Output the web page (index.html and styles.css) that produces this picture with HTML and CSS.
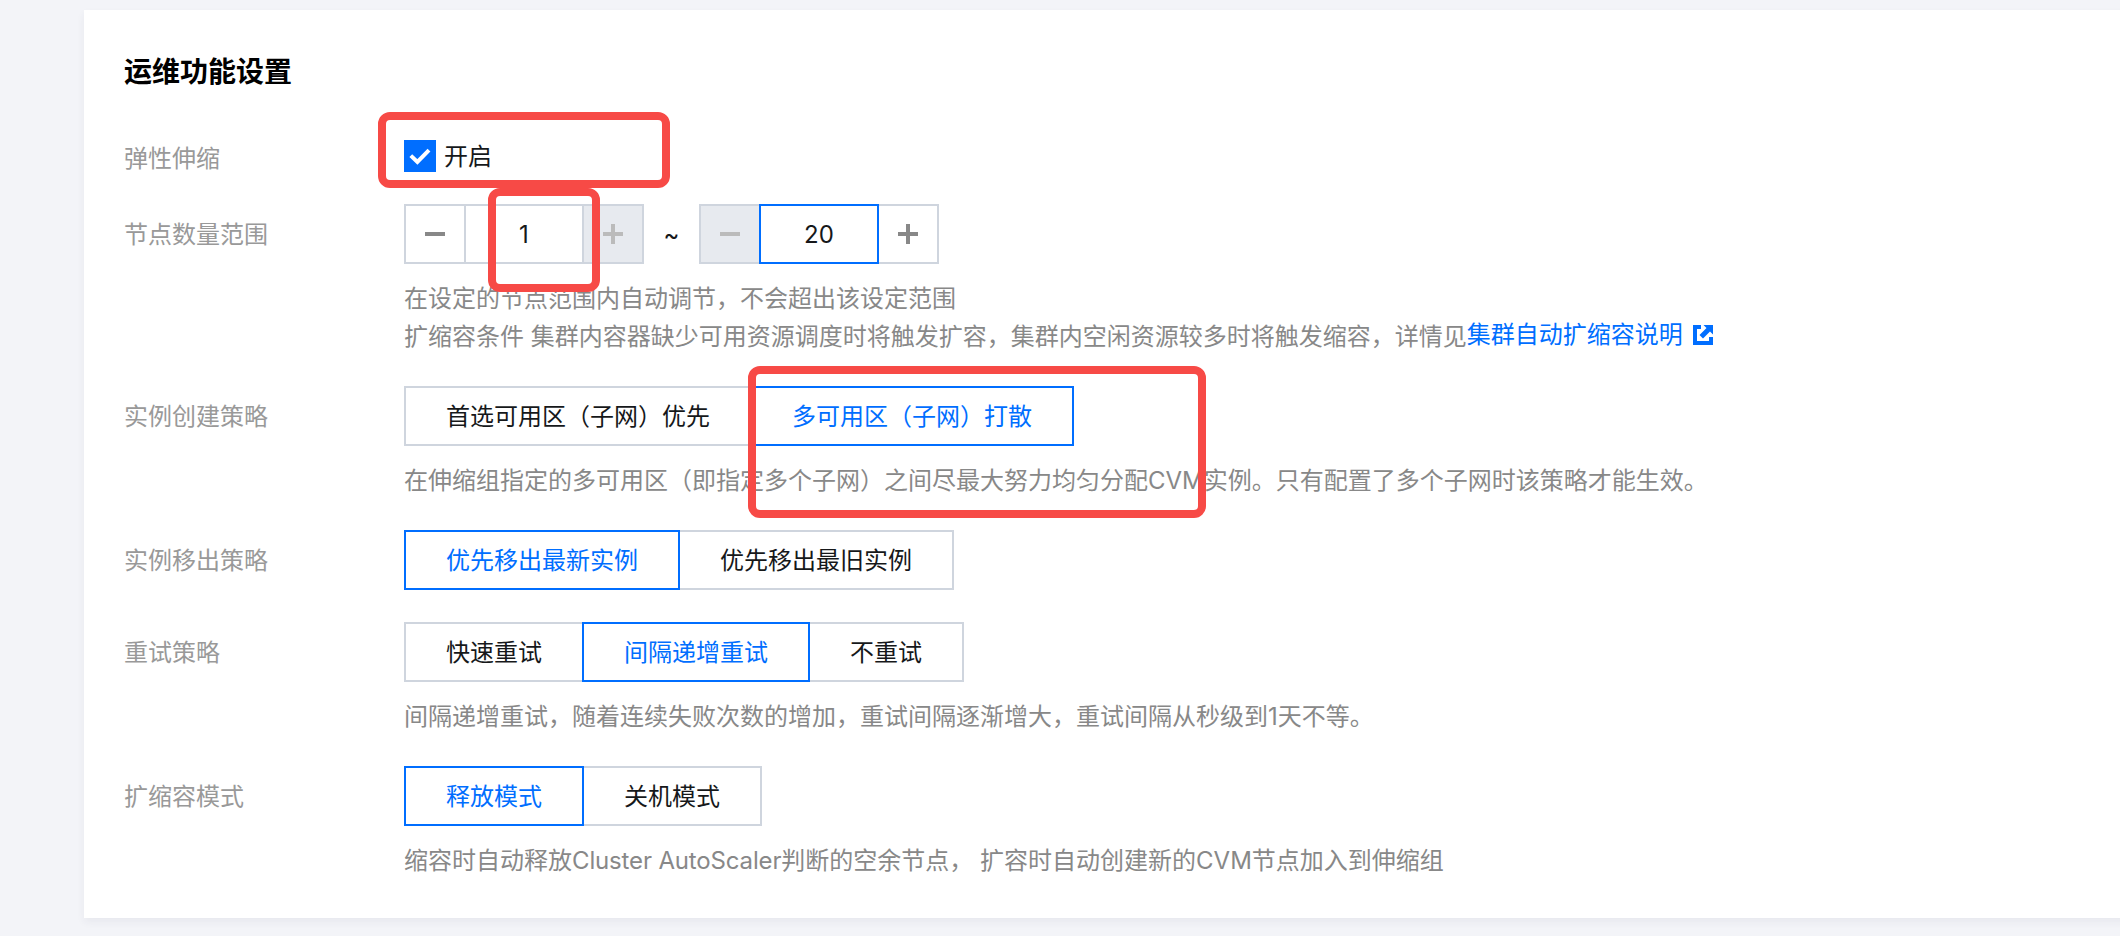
FILE: index.html
```html
<!DOCTYPE html>
<html lang="zh-CN">
  <head>
    <meta charset="UTF-8" />
    <meta name="viewport" content="width=device-width, initial-scale=1.0" />
    <title>运维功能设置</title>
    <link rel="stylesheet" href="styles.css" />
  </head>
  <body>
    <div class="card">
      <h2>运维功能设置</h2>

      <div class="form">
        <!-- Auto scaling switch -->
        <div class="row row-switch">
          <div class="label">弹性伸缩</div>
          <div class="control">
            <label class="checkbox">
              <span class="check-box">
                <svg width="32" height="32" viewBox="0 0 32 32">
                  <path d="M6.8 15.6l6.6 6.4L25 10.2" fill="none" stroke="#fff" stroke-width="4" />
                </svg>
              </span>
              <span class="check-text">开启</span>
            </label>
          </div>
        </div>

        <!-- Node range -->
        <div class="row">
          <div class="label">节点数量范围</div>
          <div class="control">
            <div class="range">
              <div class="stepper">
                <button class="step minus"></button>
                <span class="num">1</span>
                <button class="step plus disabled"></button>
              </div>
              <span class="tilde">~</span>
              <div class="stepper">
                <button class="step minus disabled"></button>
                <span class="num active">20</span>
                <button class="step plus"></button>
              </div>
            </div>
            <p class="help">在设定的节点范围内自动调节，不会超出该设定范围</p>
            <p class="help help-link">
              <span>扩缩容条件 集群内容器缺少可用资源调度时将触发扩容，集群内空闲资源较多时将触发缩容，详情见</span>
              <a href="#">集群自动扩缩容说明
                <svg width="20" height="20" viewBox="0 0 20 20">
                  <path d="M8 0H0v20h20v-8h-4v4H4V4h4zM10.5 0H20v9.5l-3-3-7 7-3.5-3.5 7-7z" fill="#006eff" />
                </svg>
              </a>
            </p>
          </div>
        </div>

        <!-- Instance creation policy -->
        <div class="row">
          <div class="label">实例创建策略</div>
          <div class="control">
            <div class="segment">
              <button>首选可用区（子网）优先</button>
              <button class="active">多可用区（子网）打散</button>
            </div>
            <p class="help">在伸缩组指定的多可用区（即指定多个子网）之间尽最大努力均匀分配CVM实例。只有配置了多个子网时该策略才能生效。</p>
          </div>
        </div>

        <!-- Instance removal policy -->
        <div class="row">
          <div class="label">实例移出策略</div>
          <div class="control">
            <div class="segment">
              <button class="active">优先移出最新实例</button>
              <button>优先移出最旧实例</button>
            </div>
          </div>
        </div>

        <!-- Retry policy -->
        <div class="row">
          <div class="label">重试策略</div>
          <div class="control">
            <div class="segment">
              <button>快速重试</button>
              <button class="active">间隔递增重试</button>
              <button>不重试</button>
            </div>
            <p class="help">间隔递增重试，随着连续失败次数的增加，重试间隔逐渐增大，重试间隔从秒级到1天不等。</p>
          </div>
        </div>

        <!-- Scaling mode -->
        <div class="row">
          <div class="label">扩缩容模式</div>
          <div class="control">
            <div class="segment">
              <button class="active">释放模式</button>
              <button>关机模式</button>
            </div>
            <p class="help">缩容时自动释放<span class="latin">Cluster AutoScaler</span>判断的空余节点， 扩容时自动创建新的CVM节点加入到伸缩组</p>
          </div>
        </div>
      </div>

      <!-- Red highlight marks -->
      <div class="mark mark-switch"></div>
      <div class="mark mark-min"></div>
      <div class="mark mark-zone"></div>
    </div>
  </body>
</html>
```
FILE: styles.css
```css
/* Global Styles */
* {
  margin: 0;
  padding: 0;
  box-sizing: border-box;
}

body {
  font-family: Inter, "Noto Sans CJK SC", sans-serif;
  font-size: 24px;
  line-height: 36px;
  color: #16181a;
  background: #f3f4f8;
  height: 936px;
  padding: 10px 0 0 84px;
  overflow: hidden;
}

/* Main Card */
.card {
  position: relative;
  width: 2080px;
  height: 908px;
  padding: 41px 40px 40px;
  background: #fff;
  box-shadow: 0 4px 8px rgba(54, 58, 80, 0.06);
}

h2 {
  font-size: 28px;
  line-height: 42px;
  font-weight: 700;
  color: #000;
  margin-bottom: 33px;
}

/* Form Rows */
.form {
  display: flex;
  flex-direction: column;
  gap: 32px;
}

.row {
  display: flex;
}

.row-switch {
  height: 46px;
}

.label {
  width: 280px;
  flex: none;
  line-height: 62px;
  height: 60px;
  color: #999;
}

.row-switch .label {
  line-height: 66px;
}

.help {
  height: 36px;
  line-height: 38px;
  color: #888;
  white-space: nowrap;
}

.range + .help,
.segment + .help {
  margin-top: 16px;
}

.latin {
  letter-spacing: -0.15px;
}

.help-link {
  display: flex;
  height: 38px;
  line-height: 42px;
}

.help-link a {
  display: flex;
  align-items: center;
  gap: 10px;
  line-height: 38px;
  height: 38px;
  color: #006eff;
  text-decoration: none;
}

/* Checkbox */
.checkbox {
  display: flex;
  align-items: center;
  gap: 8px;
  height: 60px;
}

.check-box {
  width: 32px;
  height: 32px;
  background: #006eff;
}

.check-box svg {
  display: block;
}

.check-text {
  padding-top: 2px;
}

/* Number Steppers */
.range {
  display: flex;
}

.stepper {
  display: flex;
  width: 240px;
  height: 60px;
}

.tilde {
  width: 55px;
  line-height: 62px;
  height: 60px;
  text-align: center;
}

.step {
  position: relative;
  width: 62px;
  border: 2px solid #cfd5de;
  background: #fff;
  color: #888;
}

.step.disabled {
  background: #e7eaef;
  color: #bbb;
}

.step::before,
.step.plus::after {
  content: "";
  position: absolute;
  left: 19px;
  top: 26px;
  width: 20px;
  height: 4px;
  background: currentColor;
}

.step.plus::after {
  transform: rotate(90deg);
}

.num {
  width: 120px;
  margin: 0 -2px;
  border: 2px solid #cfd5de;
  line-height: 58px;
  text-align: center;
}

.num.active {
  position: relative;
  z-index: 1;
  border-color: #006eff;
}

/* Segmented Buttons */
.segment {
  display: flex;
}

.segment button {
  height: 60px;
  padding: 2px 40px 0;
  border: 2px solid #cfd5de;
  background: #fff;
  color: inherit;
  font: inherit;
}

.segment button + button {
  margin-left: -2px;
}

.segment button.active {
  position: relative;
  z-index: 1;
  border-color: #006eff;
  color: #006eff;
}

/* Highlight Marks */
.mark {
  position: absolute;
  z-index: 2;
  border: 8px solid #f74a46;
  border-radius: 12px;
}

.mark-switch {
  left: 294px;
  top: 102px;
  width: 292px;
  height: 76px;
}

.mark-min {
  left: 404px;
  top: 178px;
  width: 112px;
  height: 104px;
}

.mark-zone {
  left: 664px;
  top: 356px;
  width: 458px;
  height: 152px;
}
```
